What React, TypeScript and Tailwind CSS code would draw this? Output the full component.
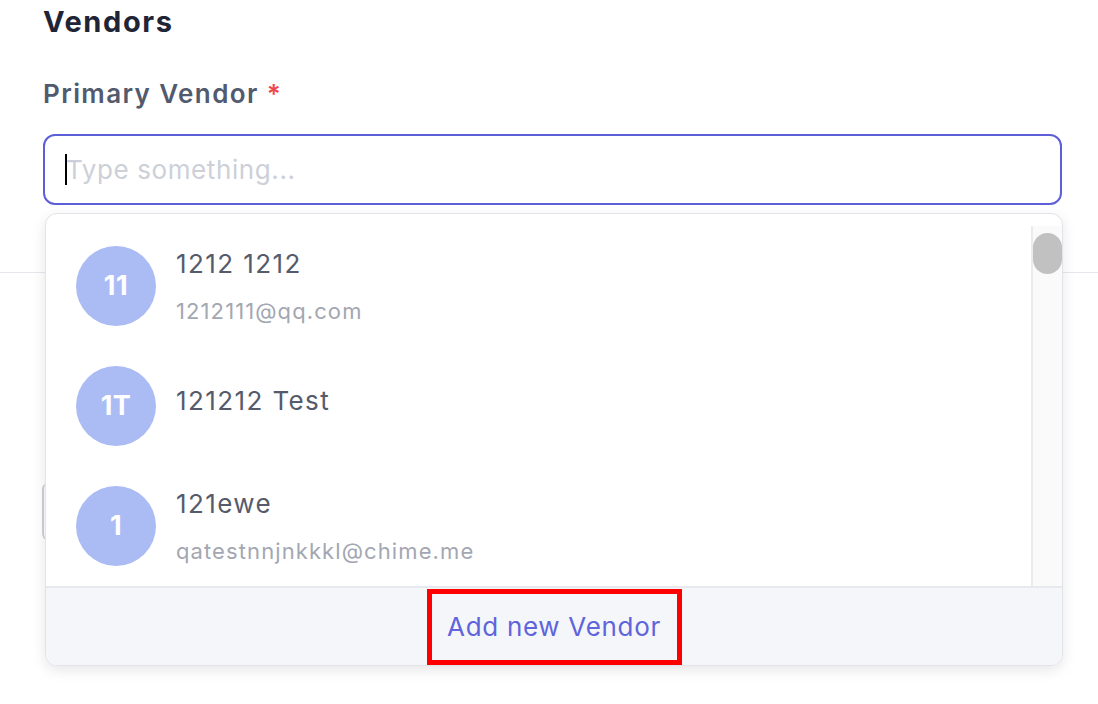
import React from 'react';

const vendors = [
  { initials: '11', name: '1212 1212', email: '1212111@qq.com' },
  { initials: '1T', name: '121212 Test', email: '' },
  { initials: '1', name: '121ewe', email: 'qatestnnjnkkkl@chime.me' },
];

export default function App() {
  return (
    <div className="relative w-[1098px] h-[704px] overflow-hidden bg-white font-['Inter','Liberation_Sans',sans-serif]">
      {/* page content */}
      <div className="px-[43px] pt-[2px]">
        <h2 className="text-[29px] leading-[40px] font-bold tracking-[1.6px] text-[#1f2536]">Vendors</h2>
        <label className="block mt-[35px] text-[26px] leading-[34px] font-semibold tracking-[1.4px] text-[#515a6e]">
          Primary Vendor <span className="text-[#f0474e]">*</span>
        </label>
        <div className="relative mt-[23px] h-[71px] w-[1019px] rounded-[12px] border-2 border-[#5d5fd9] flex items-center pl-[20px]">
          <span className="w-[2px] h-[31px] bg-black" />
          <span className="ml-[-1px] text-[26px] tracking-[0.6px] text-[#cdd0d8]">Type something...</span>
        </div>
      </div>

      {/* things under the menu */}
      <div className="absolute left-0 right-0 top-[272px] border-t border-[#e6e7ec]" />
      <div className="absolute left-[42px] top-[483px] h-[57px] w-[20px] border-l-2 border-[#cfd1d8] rounded-l-[6px]" />

      {/* dropdown menu */}
      <div className="absolute left-[45px] top-[213px] w-[1018px] h-[453px] rounded-[12px] border border-[#e3e4ea] bg-white shadow-[0_4px_14px_rgba(0,0,0,0.10)] overflow-hidden flex flex-col">
        <div className="flex flex-1">
          <div className="flex-1 pt-[12px]">
            {vendors.map((v) => (
              <div key={v.name} className="h-[120px] flex items-center pl-[30px]">
                <div className="w-[80px] h-[80px] rounded-full bg-[#abbcf5] flex items-center justify-center text-white text-[27px] font-bold tracking-[0.5px]">
                  {v.initials}
                </div>
                <div className="ml-[20px] flex flex-col">
                  <span className="text-[26px] leading-[39px] tracking-[1.4px] text-[#555b6b] mb-[12px]">{v.name}</span>
                  {v.email && (
                    <span className="text-[22px] leading-[33px] tracking-[1.1px] text-[#a3a7b2]">{v.email}</span>
                  )}
                </div>
              </div>
            ))}
          </div>
          <div className="w-[31px] mt-[12px] border-l-2 border-[#ebebee] bg-[#fafafa] relative">
            <div className="absolute left-0 top-[7px] w-[29px] h-[41px] rounded-full bg-[#c1c1c1]" />
          </div>
        </div>
        <div className="h-[80px] border-t-2 border-[#e8e9ee] bg-[#f5f6fa] flex items-center justify-center">
          <div className="w-[255px] h-[76px] border-[5px] border-[#ff0000] flex items-center justify-center">
            <span className="text-[26px] tracking-[0.7px] text-[#6064dc]">Add new Vendor</span>
          </div>
        </div>
      </div>
    </div>
  );
}
